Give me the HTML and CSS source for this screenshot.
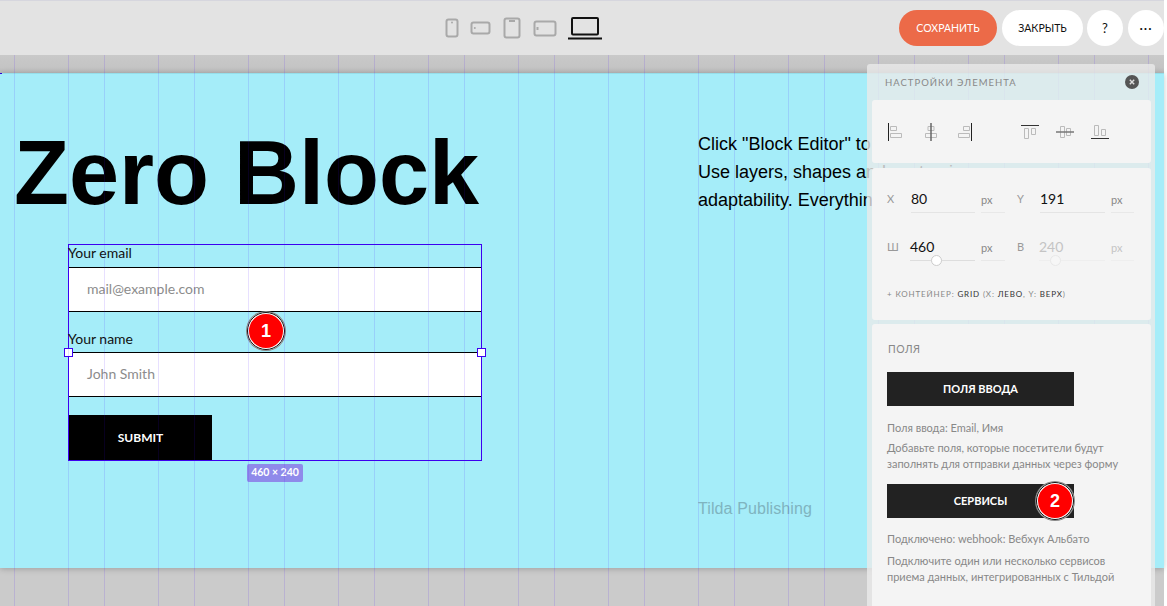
FILE: index.html
```html
<!DOCTYPE html>
<html lang="ru">
<head>
<meta charset="utf-8">
<title>Zero Block</title>
<link rel="stylesheet" href="styles.css">
</head>
<body>
<header class="topbar">
  <nav class="devices">
    <svg class="dev d1" width="14" height="20" viewBox="0 0 14 20"><rect x="1.5" y="1.5" width="11" height="17" rx="2"/><circle cx="7" cy="4.5" r="1"/></svg>
    <svg class="dev d2" width="21" height="14" viewBox="0 0 21 14"><rect x="1.5" y="1.5" width="18" height="11" rx="2"/><circle cx="4.8" cy="7" r="1"/></svg>
    <svg class="dev d3" width="18" height="22" viewBox="0 0 18 22"><rect x="1.5" y="1.5" width="15" height="19" rx="2"/><path d="M6 4h6" /></svg>
    <svg class="dev d4" width="24" height="17" viewBox="0 0 24 17"><rect x="1.5" y="1.5" width="21" height="14" rx="2"/><path d="M4.5 7v3"/></svg>
    <svg class="dev d5" width="34" height="23" viewBox="0 0 34 23"><rect x="4" y="1" width="26" height="16.5" rx="1"/><path d="M0 21.5h34"/></svg>
  </nav>
  <div class="actions">
    <button class="pill save">СОХРАНИТЬ</button>
    <button class="pill close">ЗАКРЫТЬ</button>
    <button class="round help">?</button>
    <button class="round dots">···</button>
  </div>
</header>

<main class="stage">
  <section class="canvas">
    <h1 class="title">Zero Block</h1>
    <p class="copy">Click "Block Editor" to enter the edit mode.<br>Use layers, shapes and customize<br>adaptability. Everything is in your hands.</p>
    <p class="credit">Tilda Publishing</p>
    <form class="form">
      <label class="label l1">Your email</label>
      <div class="field">mail@example.com</div>
      <label class="label l2">Your name</label>
      <div class="field">John Smith</div>
      <div class="submit">SUBMIT</div>
      <span class="handle hl"></span>
      <span class="handle hr"></span>
      <span class="size">460 × 240</span>
    </form>
    <span class="badge b1">1</span>
  </section>
  <span class="tick"></span>
</main>

<div class="gridlines"></div>

<aside class="panel">
  <div class="panel-head">
    <span>НАСТРОЙКИ ЭЛЕМЕНТА</span>
    <svg class="x" width="14" height="14" viewBox="0 0 14 14"><circle cx="7" cy="7" r="7" fill="#555"/><path d="M4.8 4.8l4.4 4.4M9.2 4.8l-4.4 4.4" stroke="#ddd" stroke-width="1.4"/></svg>
  </div>
  <div class="card aligns">
    <svg class="al" width="14" height="18" viewBox="0 0 14 18"><path class="ln" d="M.5 0v18"/><path class="bx" d="M2.5 3.5h6v4h-6zM2.5 10.5h11v4h-11z"/></svg>
    <svg class="al m1" width="12" height="18" viewBox="0 0 12 18"><path class="bx" d="M3 3.5h6v4H3zM.5 10.5h11v4H.5z"/><path class="ln" d="M6 0v18"/></svg>
    <svg class="al m2" width="14" height="18" viewBox="0 0 14 18"><path class="ln" d="M13.5 0v18"/><path class="bx" d="M5.5 3.5h6v4h-6zM.5 10.5h11v4H.5z"/></svg>
    <svg class="al m3" width="18" height="14" viewBox="0 0 18 14"><path class="ln" d="M0 .5h18"/><path class="bx" d="M3.5 3.5h4v10h-4zM10.5 3.5h4v6h-4z"/></svg>
    <svg class="al m4" width="18" height="14" viewBox="0 0 18 14"><path class="bx" d="M4.5 1.5h4v11h-4zM10.5 3.5h4v7h-4z"/><path class="ln" d="M0 7h18"/></svg>
    <svg class="al m5" width="18" height="14" viewBox="0 0 18 14"><path class="ln" d="M0 13.5h18"/><path class="bx" d="M3.5 .5h4v10h-4zM10.5 4.5h4v6h-4z"/></svg>
  </div>
  <div class="card props">
    <div class="row">
      <span class="pl">X</span><span class="val">80</span><span class="unit">px</span>
      <span class="pl pl2">Y</span><span class="val">191</span><span class="unit">px</span>
    </div>
    <div class="row">
      <span class="pl">Ш</span><span class="val slider">460<i class="knob k1"></i></span><span class="unit">px</span>
      <span class="pl pl2">В</span><span class="val slider off">240<i class="knob k2"></i></span><span class="unit off">px</span>
    </div>
    <p class="container">+ КОНТЕЙНЕР: <b>GRID</b> (X: <b>ЛЕВО</b>, Y: <b>ВЕРХ</b>)</p>
  </div>
  <div class="card fields">
    <h2 class="fields-title">ПОЛЯ</h2>
    <div class="dark">ПОЛЯ ВВОДА</div>
    <p class="note n1">Поля ввода: Email, Имя</p>
    <p class="note n2">Добавьте поля, которые посетители будут<br>заполнять для отправки данных через форму</p>
    <div class="dark services">СЕРВИСЫ<span class="badge b2">2</span></div>
    <p class="note n3">Подключено: webhook: Вебхук Альбато</p>
    <p class="note n4">Подключите один или несколько сервисов<br>приема данных, интегрированных с Тильдой</p>
  </div>
</aside>
</body>
</html>
```
FILE: styles.css
```css
* { box-sizing: border-box; }
html, body { margin: 0; height: 100%; }
body {
  position: relative;
  width: 1167px;
  height: 606px;
  overflow: hidden;
  background: #fff;
  font-family: Lato, "Noto Sans", sans-serif;
  color: #000;
}
.topbar {
  position: relative;
  z-index: 3;
  width: 1164px;
  height: 55px;
  background: #e3e3e3;
  border-top: 1px solid #d6d6de;
}
.devices {
  position: absolute;
  left: 445px;
  top: 0;
  height: 54px;
  display: flex;
  align-items: center;
}
.dev { display: block; fill: none; stroke: #a9a9a9; stroke-width: 2; }
.dev circle { fill: #a9a9a9; stroke: none; }
.d1 { margin-right: 11px; }
.d2 { margin-right: 12px; }
.d3 { margin-right: 12px; }
.d4 { margin-right: 11px; }
.d5 { stroke: #111; stroke-width: 2; }
.actions {
  position: absolute;
  right: 0;
  top: 9px;
  display: flex;
  gap: 4px;
}
.pill, .round {
  height: 36px;
  border: 0;
  border-radius: 18px;
  padding: 0;
  font: 10.5px Lato, "Noto Sans", sans-serif;
  background: #fff;
  color: #111;
}
.save { width: 98px; margin-right: 1px; background: #ec6a48; color: #fff; }
.close { width: 81px; }
.round { width: 36px; font-size: 13px; }
.help { margin-right: 1px; }
.dots { letter-spacing: 1px; }

.stage {
  position: relative;
  width: 1164px;
  height: 551px;
  padding-top: 18px;
  background: #cbcbcb linear-gradient(#c9c9c9, #c4c4c4 70%, #bbb 100%) 0 0 / 100% 18px no-repeat;
}
.canvas {
  position: relative;
  height: 495px;
  background: #a5edf9;
  border-top: 1px solid #95dfeb;
  box-shadow: 0 1px 6px rgba(0, 0, 0, .22);
}
.tick { position: absolute; left: 0; top: 18px; width: 2px; height: 1px; background: #2a00d8; }
.title {
  position: absolute;
  left: 14px;
  top: 45px;
  margin: 0;
  font: 700 90px/108px "Liberation Sans", Arial, sans-serif;
  white-space: nowrap;
}
.copy {
  position: absolute;
  left: 698px;
  top: 56px;
  margin: 0;
  font: 18px/28px "Liberation Sans", Arial, sans-serif;
  white-space: nowrap;
}
.credit {
  position: absolute;
  left: 698px;
  top: 425px;
  margin: 0;
  font: 16px/20px "Liberation Sans", Arial, sans-serif;
  letter-spacing: .1px;
  color: #7fb4c0;
}
.form {
  position: absolute;
  left: 68px;
  top: 170px;
  width: 414px;
  height: 217px;
  border: 1px solid #3d00f0;
  display: flex;
  flex-direction: column;
}
.label { font-size: 14px; line-height: 15px; color: #111; white-space: nowrap; }
.l1 { height: 22px; margin-left: -1px; }
.l2 { height: 23px; margin: 18px 0 0 -1px; line-height: 18px; }
.field {
  height: 45px;
  padding-left: 18px;
  background: #fff;
  border-top: 1px solid #000;
  border-bottom: 1px solid #000;
  font-size: 14px;
  line-height: 42px;
  color: #8c8c8c;
}
.submit {
  width: 143px;
  height: 45px;
  margin-top: 18px;
  background: #000;
  color: #fff;
  font-size: 12px;
  font-weight: 700;
  line-height: 45px;
  text-align: center;
}
.handle {
  position: absolute;
  top: 103px;
  width: 9px;
  height: 9px;
  background: #fff;
  border: 1px solid #3d00f0;
}
.hl { left: -5px; }
.hr { right: -5px; }
.size {
  position: absolute;
  left: 178px;
  top: 219px;
  width: 56px;
  height: 18px;
  border-radius: 2px;
  background: #8f8aea;
  color: #fff;
  font-size: 10.5px;
  font-weight: 700;
  line-height: 16px;
  text-align: center;
}
.badge {
  position: absolute;
  width: 38px;
  height: 38px;
  border-radius: 50%;
  background: #f00;
  border: 2px solid #fff;
  outline: 1px solid #111;
  outline-offset: -1px;
  box-shadow: 0 0 0 1px #888;
  color: #fff;
  font: 700 18px/34px "Liberation Sans", Arial, sans-serif;
  text-align: center;
}
.b1 { left: 247px; top: 238px; }
.b2 { left: 149px; top: -2px; }

.gridlines {
  position: absolute;
  z-index: 1;
  top: 55px;
  right: 3px;
  bottom: 0;
  left: 0;
  pointer-events: none;
  background-image:
    linear-gradient(to right, rgba(64, 0, 255, .12) 1px, transparent 1px),
    linear-gradient(to right, rgba(64, 0, 255, .12) 1px, transparent 1px);
  background-size: 90px 100%, 90px 100%;
  background-position: 14px 0, 68px 0;
}

.panel {
  position: absolute;
  z-index: 4;
  left: 867px;
  top: 64px;
  width: 288px;
  height: 542px;
  padding: 0 4px 0 5px;
  border-radius: 3px 3px 0 0;
  background: rgba(234, 234, 234, .8);
}
.panel-head {
  height: 36px;
  padding: 0 12px 0 13px;
  display: flex;
  align-items: center;
  justify-content: space-between;
  font-size: 9.5px;
  letter-spacing: 1px;
  color: #888;
}
.card {
  background: #f4f4f4;
  border-radius: 3px;
  margin-bottom: 5px;
}
.aligns {
  height: 63px;
  padding: 23px 0 0 16px;
  display: flex;
  align-items: flex-start;
}
.ln { fill: none; stroke: #222; stroke-width: 1; }
.bx { fill: none; stroke: #bbb; stroke-width: 1; }
.m1 { margin-left: 23px; }
.m2 { margin-left: 21px; }
.m3 { margin-left: 49px; margin-top: 2px; }
.m4 { margin-left: 17px; margin-top: 2px; }
.m5 { margin-left: 17px; margin-top: 2px; }
.m4 .ln { stroke: #777; stroke-width: 1.5; }
.m3 .ln, .m5 .ln { stroke: #333; }
.m1 .ln { stroke: #666; stroke-width: 1.5; }

.props { height: 152px; margin-bottom: 4px; padding: 20px 0 0 15px; }
.row {
  display: grid;
  grid-template-columns: 24px 64px 30px 35px 65px 29px;
  height: 48px;
  align-items: start;
  font-size: 13px;
}
.pl { font-size: 11px; line-height: 22px; color: #999; }
.pl2 { margin-left: 12px; }
.val {
  display: block;
  position: relative;
  height: 25px;
  border-bottom: 1px solid #e4e4e4;
  font-size: 14px;
  line-height: 22px;
  color: #111;
}
.unit {
  display: block;
  height: 25px;
  margin-left: 6px;
  border-bottom: 1px solid #e8e8e8;
  font-size: 11px;
  line-height: 24px;
  color: #888;
}
.slider { height: 25px; margin-left: -1px; border-bottom-color: #ddd; }
.off { color: #c4c4c4; border-bottom-color: #eee; }
.knob {
  position: absolute;
  top: 19px;
  width: 11px;
  height: 11px;
  border-radius: 50%;
  background: #fff;
  border: 1px solid #ccc;
}
.k1 { left: 21px; }
.k2 { left: 11px; border-color: #e8e8e8; background: #f6f6f6; }
.container {
  margin: 4px 0 0;
  font-size: 8px;
  letter-spacing: .85px;
  line-height: 12px;
  color: #888;
}
.container b { font-weight: 400; color: #333; }

.fields { height: 290px; padding: 18px 0 0 15px; }
.fields-title { margin: 0 0 0 1px; font-size: 10.5px; font-weight: 400; line-height: 14px; letter-spacing: .5px; color: #888; }
.dark {
  position: relative;
  width: 187px;
  height: 34px;
  margin-top: 16px;
  background: #222;
  color: #fff;
  font-size: 11px;
  font-weight: 700;
  line-height: 34px;
  text-align: center;
}
.note { margin: 0; font-size: 11px; line-height: 16px; color: #888; white-space: nowrap; }
.n1 { margin-top: 14px; }
.n2 { margin-top: 4px; }
.services { margin-top: 12px; }
.n3 { margin-top: 13px; }
.n4 { margin-top: 6px; }
```
